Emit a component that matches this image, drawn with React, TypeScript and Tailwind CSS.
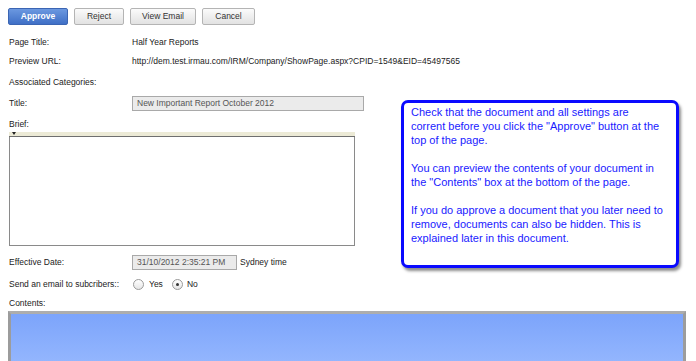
import React from "react";

function Btn({ label, primary, w }: { label: string; primary?: boolean; w: string }) {
	return (
		<div
			className={
				primary
					? `${w} h-[17px] flex items-center justify-center rounded-[2px] border border-[#3b65b3] bg-gradient-to-b from-[#6b98e0] to-[#3f6fc6] text-white font-bold text-[8.5px]`
					: `${w} h-[17px] flex items-center justify-center rounded-[2px] border border-[#b4b4b4] bg-gradient-to-b from-[#fbfbfb] to-[#e2e2e2] text-[#333] text-[8.5px]`
			}
		>
			{label}
		</div>
	);
}

function Radio({ checked }: { checked?: boolean }) {
	return (
		<div className="w-[11px] h-[11px] rounded-full border border-[#9a9a9a] bg-gradient-to-b from-[#ffffff] to-[#e6e6e6] flex items-center justify-center">
			{checked && <div className="w-[3px] h-[3px] rounded-full bg-[#333]" />}
		</div>
	);
}

function Row({ label, h, mt, children }: { label: string; h: string; mt: string; children?: React.ReactNode }) {
	return (
		<div className={`${mt} ${h} flex items-center`}>
			<div className="w-[132px] pl-[9px] shrink-0">{label}</div>
			{children}
		</div>
	);
}

export default function App() {
	return (
		<div
			className="relative w-[696px] h-[361px] overflow-hidden bg-white text-[8.5px] text-[#222]"
			style={{ fontFamily: '"Liberation Sans", Arial, sans-serif' }}
		>
			{/* toolbar buttons */}
			<div className="pt-[8px] pl-[8px] flex gap-[6px]">
				<Btn label="Approve" primary w="w-[60px]" />
				<Btn label="Reject" w="w-[50px]" />
				<Btn label="View Email" w="w-[66px]" />
				<Btn label="Cancel" w="w-[53px]" />
			</div>

			<Row label="Page Title:" h="h-[16px]" mt="mt-[9px]">
				<span>Half Year Reports</span>
			</Row>
			<Row label="Preview URL:" h="h-[16px]" mt="mt-[3px]">
				<span>http://dem.test.irmau.com/IRM/Company/ShowPage.aspx?CPID=1549&amp;EID=45497565</span>
			</Row>
			<Row label="Associated Categories:" h="h-[16px]" mt="mt-[5px]" />
			<Row label="Title:" h="h-[17px]" mt="mt-[5px]">
				<div className="w-[232px] h-[15px] border border-[#a9a9a9] bg-[#ebebeb] text-[#555] pl-[4px] flex items-center">
					New Important Report October 2012
				</div>
			</Row>
			<Row label="Brief:" h="h-[14px]" mt="mt-[5px]" />

			{/* rich text editor */}
			<div className="mt-[1px] ml-[9px] w-[346px] h-[114px] flex flex-col">
				<div className="h-[5px] bg-[#ecead6] border-b border-[#6f6f6f] relative">
					<div className="absolute left-[3px] top-[0px] w-0 h-0 border-l-[2px] border-r-[2px] border-t-[3px] border-l-transparent border-r-transparent border-t-[#222]" />
				</div>
				<div className="flex-1 bg-white border-l border-r border-b border-[#8a8a8a]" />
			</div>

			<Row label="Effective Date:" h="h-[17px]" mt="mt-[8px]">
				<div className="w-[105px] h-[15px] border border-[#a9a9a9] bg-[#ebebeb] text-[#555] pl-[4px] flex items-center">
					31/10/2012 2:35:21 PM
				</div>
				<span className="ml-[3px]">Sydney time</span>
			</Row>
			<Row label="Send an email to subcribers::" h="h-[16px]" mt="mt-[5px]">
				<div className="flex items-center gap-[5px] ml-[1px]">
					<Radio />
					<span>Yes</span>
				</div>
				<div className="flex items-center gap-[4px] ml-[9px]">
					<Radio checked />
					<span>No</span>
				</div>
			</Row>
			<Row label="Contents:" h="h-[14px]" mt="mt-[4px]" />

			{/* contents preview */}
			<div className="mt-[1px] ml-[8px] w-[678px] h-[60px] border-t-[3px] border-l-[3px] border-r-[3px] border-t-[#adadad] border-l-[#9c9c9c] border-r-[#9c9c9c] bg-gradient-to-b from-[#7ca4fb] to-[#98b9fe]" />

			{/* annotation callout */}
			<div className="absolute left-[401px] top-[100px] w-[278px] h-[168px] rounded-[7px] border-[3px] border-[#0a0aff] bg-white shadow-[2px_3px_3px_rgba(0,0,0,0.45)] pl-[7px] pt-[2px] text-[11px] leading-[14px] text-[#1a1aff]">
				<p>
					Check that the document and all settings are
					<br />
					corrent before you click the "Approve" button at the
					<br />
					top of the page.
				</p>
				<p className="mt-[14px]">
					You can preview the contents of your document in
					<br />
					the "Contents" box at the bottom of the page.
				</p>
				<p className="mt-[14px]">
					If you do approve a document that you later need to
					<br />
					remove, documents can also be hidden. This is
					<br />
					explained later in this document.
				</p>
			</div>
		</div>
	);
}
